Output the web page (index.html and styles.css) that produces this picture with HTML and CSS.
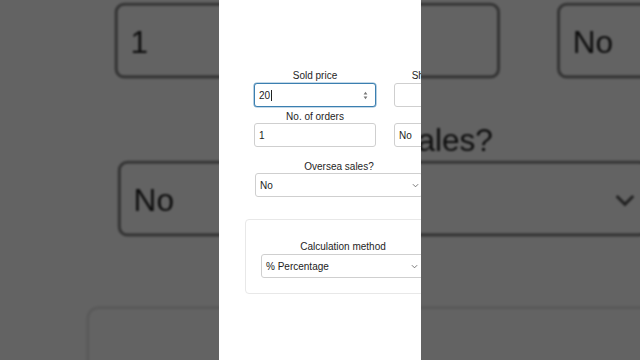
FILE: index.html
```html
<!DOCTYPE html>
<html>
<head>
<meta charset="utf-8">
<link rel="stylesheet" href="styles.css">
</head>
<body>
<div class="bg">
  <div class="strip copy">
    <div class="form">
      <div class="row">
        <div class="field"><div class="label">Sold price</div><div class="input">20</div></div>
        <div class="field"><div class="label">Shipping fee (each)</div><div class="input"></div></div>
      </div>
      <div class="row second">
        <div class="field"><div class="label">No. of orders</div><div class="input">1</div></div>
        <div class="field"><div class="label">&nbsp;</div><div class="input">No</div></div>
      </div>
      <div class="field wide"><div class="label">Oversea sales?</div><div class="input select">No<svg class="chev" viewBox="0 0 8 5" width="7" height="5"><path d="M1 1l3 3 3-3" fill="none" stroke="#555" stroke-width="1.1"/></svg></div></div>
      <div class="card">
        <div class="label">Calculation method</div>
        <div class="input select">% Percentage<svg class="chev" viewBox="0 0 8 5" width="7" height="5"><path d="M1 1l3 3 3-3" fill="none" stroke="#555" stroke-width="1.1"/></svg></div>
      </div>
    </div>
  </div>
</div>
<div class="strip main">
  <div class="form">
    <div class="row">
      <div class="field"><div class="label">Sold price</div><div class="input focus">20<span class="caret"></span><svg class="spin" viewBox="0 0 5 9" width="5" height="9"><path d="M2.5 0.8L4.4 3.4H0.6Z M2.5 8.2L4.4 5.6H0.6Z" fill="#777"/></svg></div></div>
      <div class="field"><div class="label">Shipping fee (each)</div><div class="input"></div></div>
    </div>
    <div class="row second">
      <div class="field"><div class="label">No. of orders</div><div class="input">1</div></div>
      <div class="field"><div class="label">&nbsp;</div><div class="input select">No</div></div>
    </div>
    <div class="field wide"><div class="label">Oversea sales?</div><div class="input select">No<svg class="chev" viewBox="0 0 8 5" width="7" height="5"><path d="M1 1l3 3 3-3" fill="none" stroke="#666" stroke-width="1"/></svg></div></div>
    <div class="card">
      <div class="label">Calculation method</div>
      <div class="input select">% Percentage<svg class="chev" viewBox="0 0 8 5" width="7" height="5"><path d="M1 1l3 3 3-3" fill="none" stroke="#666" stroke-width="1"/></svg></div>
    </div>
  </div>
</div>
</body>
</html>
```
FILE: styles.css
```css
html, body {
  margin: 0;
  padding: 0;
}
body {
  width: 640px;
  height: 360px;
  overflow: hidden;
  position: relative;
  display: flex;
  justify-content: center;
  background: #646464;
  font-family: "Liberation Sans", Arial, sans-serif;
  color: #222;
}
.bg {
  position: absolute;
  left: 0;
  top: 0;
  width: 640px;
  height: 360px;
  overflow: hidden;
  background: #fff;
}
.bg::after {
  content: "";
  position: absolute;
  left: 0;
  top: 0;
  right: 0;
  bottom: 0;
  background: rgba(0, 0, 0, 0.61);
}
.strip {
  width: 202px;
  height: 360px;
  flex: none;
  background: #fff;
  overflow: hidden;
  position: relative;
}
.bg .copy {
  position: absolute;
  left: 4.1px;
  top: -386px;
  transform: scale(3.16);
  transform-origin: 0 0;
  filter: blur(0.3px);
}
.copy .input {
  border-color: #8a8a8a;
}
.form {
  width: 420px;
  padding: 68px 0 0 35px;
  box-sizing: border-box;
}
.row {
  display: grid;
  grid-template-columns: 122px 122px;
  column-gap: 18px;
}
.row.second {
  margin-top: 1px;
}
.field {
  display: flex;
  flex-direction: column;
}
.label {
  font-size: 10px;
  line-height: 12px;
  text-align: center;
  white-space: nowrap;
  padding-top: 2px;
  margin-bottom: 1px;
  color: #1e1e1e;
}
.row.second .label {
  padding-top: 3px;
  margin-bottom: 0;
}
.input {
  height: 24px;
  box-sizing: border-box;
  border: 1px solid #cfcfcf;
  border-radius: 3px;
  padding: 0 4px;
  font-size: 10px;
  display: flex;
  align-items: center;
  position: relative;
  background: #fff;
  white-space: nowrap;
}
.input.focus {
  border-color: #3b7fb0;
  box-shadow: 0 0 0 0.6px rgba(59, 127, 176, 0.6);
}
.caret {
  display: inline-block;
  width: 1px;
  height: 11px;
  background: #222;
  margin-left: 1px;
}
.spin {
  position: absolute;
  right: 7px;
  top: 7px;
}
.chev {
  position: absolute;
  right: 3px;
  top: 9px;
}
.wide {
  width: 168px;
  margin-left: 1px;
  margin-top: 11px;
}
.wide .label {
  padding-top: 3px;
  margin-bottom: 0;
}
.card {
  width: 196px;
  box-sizing: border-box;
  margin: 22px 0 0 -9px;
  padding: 19px 15px 15px 15px;
  border: 1px solid #e8e8e8;
  border-radius: 4px;
  background: #fff;
}
.card .chev {
  right: 6px;
}
```
